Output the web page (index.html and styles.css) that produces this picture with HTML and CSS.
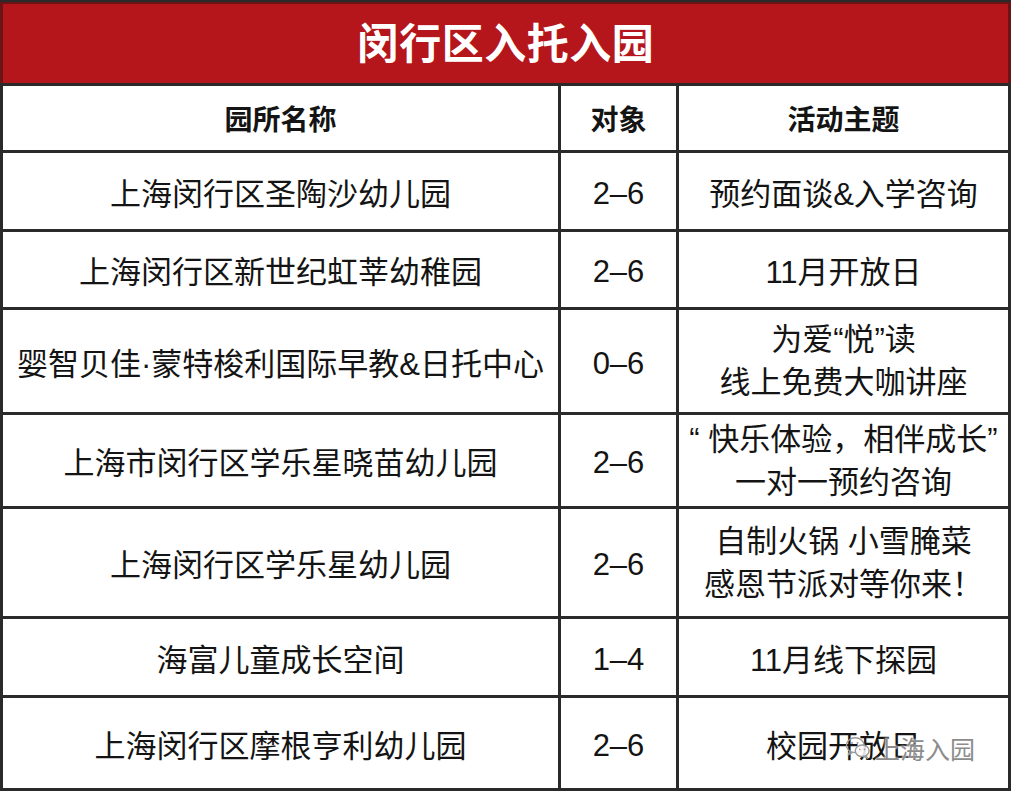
FILE: index.html
```html
<!DOCTYPE html>
<html lang="zh-CN">
<head>
<meta charset="utf-8">
<title>闵行区入托入园</title>
<link rel="stylesheet" href="styles.css">
</head>
<body>
<div class="sheet">
  <div class="title">闵行区入托入园</div>

  <div class="cell head r-head">园所名称</div>
  <div class="cell head r-head">对象</div>
  <div class="cell head r-head">活动主题</div>

  <div class="cell">上海闵行区圣陶沙幼儿园</div>
  <div class="cell num">2–6</div>
  <div class="cell">预约面谈&amp;入学咨询</div>

  <div class="cell">上海闵行区新世纪虹莘幼稚园</div>
  <div class="cell num">2–6</div>
  <div class="cell">11月开放日</div>

  <div class="cell">婴智贝佳·蒙特梭利国际早教&amp;日托中心</div>
  <div class="cell num">0–6</div>
  <div class="cell multi"><span>为爱“悦”读</span><span>线上免费大咖讲座</span></div>

  <div class="cell">上海市闵行区学乐星晓苗幼儿园</div>
  <div class="cell num">2–6</div>
  <div class="cell multi"><span>“ 快乐体验，相伴成长”</span><span>一对一预约咨询</span></div>

  <div class="cell">上海闵行区学乐星幼儿园</div>
  <div class="cell num">2–6</div>
  <div class="cell multi"><span>自制火锅 小雪腌菜</span><span>感恩节派对等你来！</span></div>

  <div class="cell">海富儿童成长空间</div>
  <div class="cell num">1–4</div>
  <div class="cell">11月线下探园</div>

  <div class="cell">上海闵行区摩根亨利幼儿园</div>
  <div class="cell num">2–6</div>
  <div class="cell last">校园开放日
    <div class="watermark">
      <svg class="wm-icon" viewBox="0 0 28 26" width="26" height="24" aria-hidden="true">
        <ellipse cx="11" cy="10" rx="9.5" ry="8" fill="none" stroke="#9a9a9a" stroke-width="1.6"/>
        <path d="M5 16.5 L3.5 20.5 L8.5 17.6" fill="none" stroke="#9a9a9a" stroke-width="1.5" stroke-linejoin="round"/>
        <ellipse cx="18.5" cy="16" rx="7.5" ry="6.2" fill="rgba(255,255,255,0.85)" stroke="#9a9a9a" stroke-width="1.6"/>
        <path d="M22.5 21 L24.5 24.2 L20 22" fill="none" stroke="#9a9a9a" stroke-width="1.4" stroke-linejoin="round"/>
        <circle cx="7.5" cy="7.5" r="1.1" fill="#9a9a9a"/>
        <circle cx="13.5" cy="7.5" r="1.1" fill="#9a9a9a"/>
        <circle cx="16" cy="14.5" r="0.9" fill="#9a9a9a"/>
        <circle cx="21" cy="14.5" r="0.9" fill="#9a9a9a"/>
      </svg>
      <span class="wm-text">上海入园</span>
    </div>
  </div>
</div>
</body>
</html>
```

FILE: styles.css
```css
html, body {
  margin: 0;
  padding: 0;
  background: #ffffff;
}

.sheet {
  width: 1011px;
  height: 791px;
  box-sizing: border-box;
  display: grid;
  grid-template-columns: 555px 115px 329px;
  grid-template-rows: 81px 64px 76px 75px 102px 91px 107px 76px 90px;
  column-gap: 3px;
  row-gap: 3px;
  padding: 2px 3px 3px 3px;
  background: #2a2a2a;
  font-family: "Liberation Sans", "Noto Sans CJK SC", sans-serif;
  color: #141414;
}

.title {
  grid-column: 1 / 4;
  background: #b5161b;
  color: #ffffff;
  font-size: 42px;
  font-weight: 700;
  display: flex;
  align-items: center;
  justify-content: center;
  letter-spacing: 0.5px;
  padding: 0 3px 5px 3px;
  margin: 0 -3px;
  box-shadow: inset 3px 0 0 #6a1416, inset -3px 0 0 #6a1416, inset 0 2px 0 #6a1416;
}

.cell {
  background: #ffffff;
  display: flex;
  align-items: center;
  justify-content: center;
  text-align: center;
  white-space: nowrap;
  font-size: 31px;
  font-weight: 400;
}

.head {
  font-size: 28px;
  font-weight: 700;
}

.num {
  font-size: 31px;
  padding-top: 5px;
}

.multi {
  flex-direction: column;
  line-height: 43px;
}

.last {
  position: relative;
}

.watermark {
  position: absolute;
  left: 166px;
  top: 32px;
  display: flex;
  align-items: center;
  gap: 4px;
}

.wm-icon {
  display: block;
}

.wm-text {
  font-size: 25px;
  color: #8c8c8c;
  text-shadow: 0 0 3px #ffffff, 0 0 2px #ffffff;
}
```
